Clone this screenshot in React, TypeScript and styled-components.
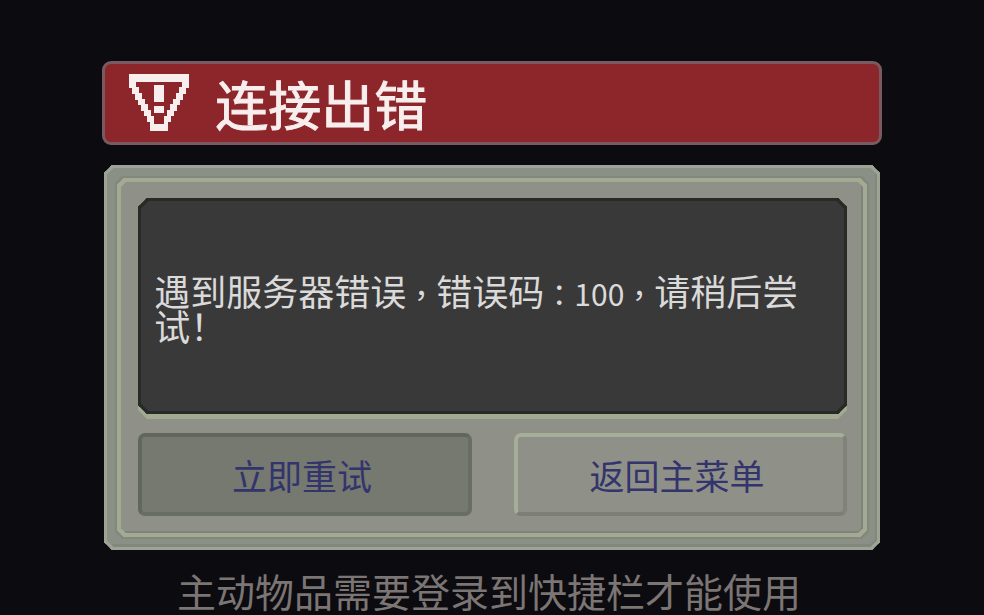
import React from "react";
import styled, { createGlobalStyle } from "styled-components";

const GlobalStyle = createGlobalStyle`
  * { box-sizing: border-box; }
  body {
    margin: 0;
    background: #0c0b10;
    font-family: "Noto Sans CJK SC", "Noto Sans", sans-serif;
  }
`;

const Screen = styled.main`
  display: flex;
  flex-direction: column;
  min-height: 100vh;
  padding: 61px 10.4% 0;
`;

const Banner = styled.header`
  display: flex;
  align-items: center;
  gap: 26px;
  height: 84px;
  padding: 0 24px;
  border: 3px solid #795a61;
  border-radius: 9px;
  background: #8c262b;
  color: #f8eeee;
`;

const WarningIcon = styled.svg`
  width: 60px;
  height: 58px;
  flex: none;
`;

const Title = styled.h1`
  margin: 0;
  font-size: 53px;
  line-height: 60px;
  font-weight: 400;
  -webkit-text-stroke: 1px currentColor;
`;

const Panel = styled.section`
  margin: 20px 2px 0;
  padding: 10px;
  border: 3px solid #9ea495;
  border-radius: 8px;
  corner-shape: bevel;
  background: #8b9086;
  box-shadow: inset -2px -3px 0 #83887d;
`;

const Frame = styled.div`
  padding: 16px 16px 17px 17px;
  border: 4px solid #a2aa94;
  border-radius: 7px;
  corner-shape: bevel;
  background: #8f9189;
  box-shadow: 0 0 0 2px #82887c, inset -2px -2px 0 #7e847a;
`;

const Display = styled.div`
  display: flex;
  align-items: center;
  min-height: 216px;
  padding: 2px 13px 0;
  border: 3px solid #282a26;
  border-radius: 9px;
  corner-shape: bevel;
  background: #393939;
  box-shadow: 0 5px 0 #a2aa94;
`;

const Message = styled.p`
  margin: 0;
  color: #dadada;
  font-size: 36px;
  line-height: 34px;
`;

const Mark = styled.span`
  font-family: "Noto Sans CJK TC", sans-serif;
  font-size: 30px;
  line-height: 1;
`;

const Actions = styled.div`
  display: grid;
  grid-template-columns: 1fr 1fr;
  gap: 42px;
  margin-top: 19px;
`;

const ActionButton = styled.button<{ $pressed?: boolean }>`
  height: 83px;
  padding: 0 6px 0 0;
  border: 4px solid;
  border-color: ${(p) =>
    p.$pressed ? "#62675d #696e64 #696e64 #62675d" : "#a5ae98 #7f8379 #7b7f75 #a5ae98"};
  border-radius: 7px;
  background: ${(p) => (p.$pressed ? "#757970" : "#8f9189")};
  color: #34346c;
  font-family: inherit;
  font-size: 35px;
  line-height: 44px;
  cursor: pointer;
`;

const Hint = styled.p`
  margin: 20px 0 0;
  padding-right: 6px;
  color: #7b7574;
  font-size: 39px;
  line-height: 40px;
  text-align: center;
`;

export default function App() {
  return (
    <>
      <GlobalStyle />
      <Screen>
        <Banner>
          <WarningIcon viewBox="0 0 60 58" aria-hidden="true">
            <path
              fill="currentColor"
              fillRule="evenodd"
              d="M0 0H60V14H57V20H54V26H51V31H48V37H45V42H42V48H39V57H21V48H18V42H15V37H12V31H9V26H6V20H3V14H0ZM7 8V13H10V19H13V25H16V30H19V36H22V42H25V50H35V42H38V36H41V30H44V25H47V19H50V13H53V8Z"
            />
            <path fill="currentColor" d="M25 11H35V28H25ZM25 32H35V39H25Z" />
          </WarningIcon>
          <Title>连接出错</Title>
        </Banner>
        <Panel>
          <Frame>
            <Display>
              <Message>
                遇到服务器错误<Mark>，</Mark>错误码<Mark>：</Mark>
                <Mark>100</Mark>
                <Mark>，</Mark>请稍后尝试！
              </Message>
            </Display>
            <Actions>
              <ActionButton type="button" $pressed>立即重试</ActionButton>
              <ActionButton type="button">返回主菜单</ActionButton>
            </Actions>
          </Frame>
        </Panel>
        <Hint>主动物品需要登录到快捷栏才能使用</Hint>
      </Screen>
    </>
  );
}
